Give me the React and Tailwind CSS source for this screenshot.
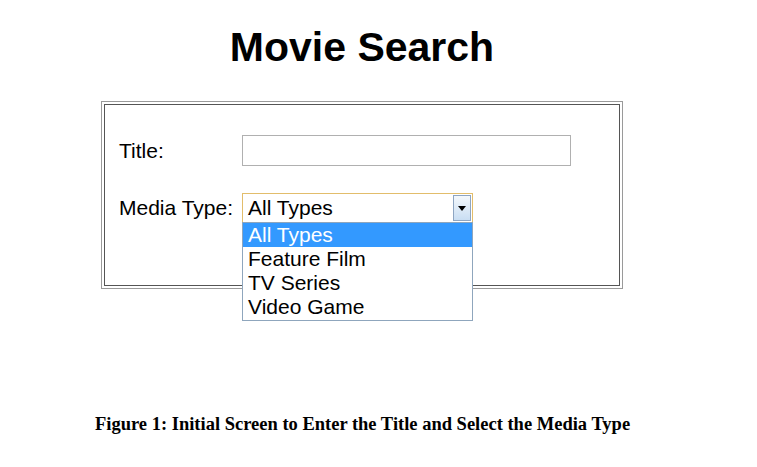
import React from 'react';

const options = ['All Types', 'Feature Film', 'TV Series', 'Video Game'];

const App = () => {
  return (
    <div className="w-[757px] h-[467px] bg-white text-black overflow-hidden" style={{ fontFamily: '"Liberation Sans", Arial, sans-serif' }}>
      <div className="ml-[101px] w-[522px]">
        <h1 className="pt-[24px] text-center text-[41px] leading-[46px] font-bold">Movie Search</h1>

        {/* form box with a double border */}
        <div className="mt-[31px] border border-[#9a9a9a] p-[2px]">
          <div className="border border-[#555] h-[182px] pt-[30px] pl-[14px]">
            <div className="grid grid-cols-[123px_1fr] gap-y-[27px] items-center text-[21px] leading-[24px]">
              <label>Title:</label>
              <input className="w-[329px] h-[31px] border border-[#b0b0b0] outline-none" />

              <label>Media Type:</label>
              <div className="relative w-[231px]">
                <div className="flex h-[30px] items-center border border-[#e2bd6b] bg-white pl-[5px]">
                  <span className="flex-1">All Types</span>
                  <div className="mr-[1px] flex h-[26px] w-[18px] items-center justify-center border border-[#8ea5c2] bg-gradient-to-b from-[#f4f8fc] to-[#c9def3]">
                    <svg width="8" height="5" viewBox="0 0 8 5"><path d="M0 0h8L4 5z" fill="#000" /></svg>
                  </div>
                </div>
                <ul className="absolute left-0 top-[29px] w-[231px] border border-[#8fa6bd] bg-white pb-[1px]">
                  {options.map((o, i) => (
                    <li key={o} className={`h-[24px] pl-[5px] leading-[24px] ${i === 0 ? 'bg-[#3399ff] text-white' : ''}`}>{o}</li>
                  ))}
                </ul>
              </div>
            </div>
          </div>
        </div>
      </div>

      <p className="ml-[95px] mt-[121px] text-[18.5px] leading-[28px] font-bold" style={{ fontFamily: '"Liberation Serif", "Times New Roman", serif' }}>
        Figure 1: Initial Screen to Enter the Title and Select the Media Type
      </p>
    </div>
  );
};

export default App;
